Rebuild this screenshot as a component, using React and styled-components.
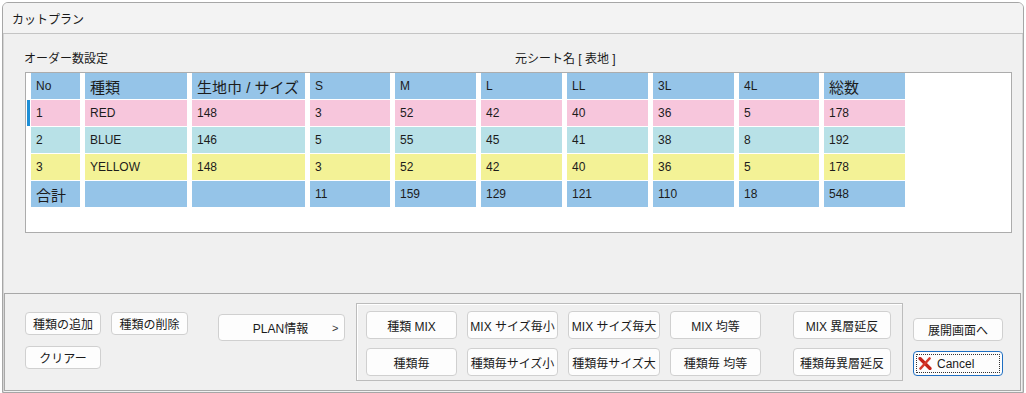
import React from "react";
import styled, { createGlobalStyle } from "styled-components";

const GlobalStyle = createGlobalStyle`
  html, body {
    margin: 0;
    padding: 0;
    background: #ffffff;
  }
  body {
    font-family: "Liberation Sans", "Noto Sans CJK JP", sans-serif;
    font-size: 12px;
    color: #1a1a1a;
  }
`;

const headers = ["No", "種類", "生地巾 / サイズ", "S", "M", "L", "LL", "3L", "4L", "総数"];

const rows = [
  { tone: "pink", selected: true, cells: [1, "RED", 148, 3, 52, 42, 40, 36, 5, 178] },
  { tone: "cyan", cells: [2, "BLUE", 146, 5, 55, 45, 41, 38, 8, 192] },
  { tone: "yellow", cells: [3, "YELLOW", 148, 3, 52, 42, 40, 36, 5, 178] },
  { tone: "blue", total: true, cells: ["合計", "", "", 11, 159, 129, 121, 110, 18, 548] },
];

const tones = {
  blue: "#95c4e8",
  pink: "#f7c6dc",
  cyan: "#b8e1e7",
  yellow: "#f3f296",
};

const groupButtons = [
  "種類 MIX",
  "MIX サイズ毎小",
  "MIX サイズ毎大",
  "MIX  均等",
  "MIX 異層延反",
  "種類毎",
  "種類毎サイズ小",
  "種類毎サイズ大",
  "種類毎 均等",
  "種類毎異層延反",
];

function CancelIcon() {
  return (
    <svg width="14" height="13" viewBox="0 0 14 13">
      <path d="M2 1.5 L12 11.5" stroke="#c4231a" strokeWidth="3.2" strokeLinecap="round" />
      <path d="M11.5 1.5 L2.5 11.5" stroke="#d63a2c" strokeWidth="2.6" strokeLinecap="round" />
    </svg>
  );
}

function App() {
  return (
    <>
      <GlobalStyle />
      <Window>
        <TitleBar>カットプラン</TitleBar>
        <Body>
          <TopSection>
            <LabelRow>
              <OrderLabel>オーダー数設定</OrderLabel>
              <span>元シート名 [ 表地 ]</span>
            </LabelRow>
            <TableBox>
              <Rows>
                <GridRow>
                  {headers.map((h, i) => (
                    <Cell key={i} $tone="blue" $jp={/[^\x00-\x7f]/.test(h)}>
                      {h}
                    </Cell>
                  ))}
                </GridRow>
                {rows.map((r, ri) => (
                  <GridRow key={ri} $selected={r.selected}>
                    {r.cells.map((c, ci) => (
                      <Cell key={ci} $tone={r.tone} $jp={r.total && ci === 0}>
                        {c}
                      </Cell>
                    ))}
                  </GridRow>
                ))}
              </Rows>
            </TableBox>
          </TopSection>
          <BottomPanel>
            <LeftButtons>
              <SmallButton>種類の追加</SmallButton>
              <SmallButton>種類の削除</SmallButton>
              <SmallButton>クリアー</SmallButton>
            </LeftButtons>
            <PlanButton>
              <PlanText>PLAN情報</PlanText>
              <Chevron>&gt;</Chevron>
            </PlanButton>
            <GroupBox>
              {groupButtons.map((b, i) => (
                <GroupButton key={i} $last={i % 5 === 4}>
                  {b}
                </GroupButton>
              ))}
            </GroupBox>
            <RightButtons>
              <SideButton>展開画面へ</SideButton>
              <SideButton $focused>
                <CancelIcon />
                <span>Cancel</span>
              </SideButton>
            </RightButtons>
          </BottomPanel>
        </Body>
      </Window>
    </>
  );
}

const Window = styled.div`
  box-sizing: border-box;
  width: 1022px;
  height: 391px;
  margin: 2px 0 0 2px;
  border: 1px solid #a6a6a6;
  border-radius: 6px 6px 0 0;
  background: #f0f0f0;
  display: flex;
  flex-direction: column;
  overflow: hidden;
`;

const TitleBar = styled.div`
  height: 30px;
  display: flex;
  align-items: center;
  padding-left: 9px;
  border-bottom: 1px solid #c4c4c4;
  background: #f3f3f3;
  color: #1a1a1a;
`;

const Body = styled.div`
  flex: 1;
  display: flex;
  flex-direction: column;
  border-left: 1px solid #d4d4d4;
  border-right: 1px solid #d4d4d4;
`;

const TopSection = styled.div`
  height: 259px;
  box-sizing: border-box;
  padding: 15px 0 0 21px;
`;

const LabelRow = styled.div`
  display: flex;
  height: 16px;
  align-items: center;
  margin-left: -1px;
`;

const OrderLabel = styled.span`
  width: 491px;
`;

const TableBox = styled.div`
  box-sizing: border-box;
  width: 987px;
  height: 161px;
  margin-top: 7px;
  background: #ffffff;
  border: 1px solid #acacac;
`;

const Rows = styled.div`
  display: flex;
  flex-direction: column;
  gap: 1px;
  padding-left: 5px;
`;

const GridRow = styled.div`
  position: relative;
  display: grid;
  grid-template-columns: 49px 102px 113px 80px 81px 81px 81px 81px 80px 81px;
  column-gap: 5px;
  height: 26px;

  ${(p) =>
    p.$selected &&
    `
    &::before {
      content: "";
      position: absolute;
      left: -4px;
      top: 0;
      width: 3px;
      height: 100%;
      background: #1e8fd6;
    }
  `}
`;

const Cell = styled.div`
  display: flex;
  align-items: center;
  padding-left: 5px;
  background: ${(p) => tones[p.$tone]};
  font-size: ${(p) => (p.$jp ? "15px" : "12px")};
  color: #1c1c1c;
  white-space: nowrap;
  overflow: hidden;
`;

const BottomPanel = styled.div`
  box-sizing: border-box;
  height: 98px;
  margin: 0 1px 0 0;
  border: 1px solid #a8a8a8;
  display: flex;
  align-items: flex-start;
  padding-left: 20px;
`;

const BaseButton = styled.div`
  box-sizing: border-box;
  display: flex;
  align-items: center;
  justify-content: center;
  background: #fdfdfd;
  border: 1px solid #d0d0d0;
  border-radius: 4px;
  color: #1a1a1a;
  white-space: nowrap;
`;

const LeftButtons = styled.div`
  margin-top: 18px;
  display: grid;
  grid-template-columns: 76px 77px;
  grid-auto-rows: 23px;
  column-gap: 10px;
  row-gap: 11px;
`;

const SmallButton = styled(BaseButton)``;

const PlanButton = styled(BaseButton)`
  width: 127px;
  height: 27px;
  margin: 20px 0 0 30px;
  justify-content: flex-start;
`;

const PlanText = styled.span`
  flex: 1;
  text-align: center;
  padding-left: 10px;
`;

const Chevron = styled.span`
  width: 12px;
  font-size: 11px;
  color: #333;
`;

const GroupBox = styled.div`
  box-sizing: border-box;
  width: 547px;
  height: 78px;
  margin: 9px 0 0 11px;
  border: 1px solid #bcbcbc;
  box-shadow: inset 1px 1px 0 #ffffff;
  padding: 7px 0 0 9px;
  display: grid;
  grid-template-columns: 91px 91px 92px 91px 120px;
  grid-auto-rows: 28px;
  column-gap: 10px;
  row-gap: 9px;
`;

const GroupButton = styled(BaseButton)`
  width: ${(p) => (p.$last ? "98px" : "auto")};
  justify-self: ${(p) => (p.$last ? "end" : "stretch")};
`;

const RightButtons = styled.div`
  width: 90px;
  margin: 24px 0 0 10px;
  display: flex;
  flex-direction: column;
  gap: 10px;
`;

const SideButton = styled(BaseButton)`
  height: ${(p) => (p.$focused ? "25px" : "23px")};
  gap: 5px;
  ${(p) =>
    p.$focused &&
    `
    border-color: #1f6fc2;
    outline: 1px dotted #333;
    outline-offset: -4px;
    justify-content: flex-start;
    padding-left: 4px;
  `}
`;

export default App;
